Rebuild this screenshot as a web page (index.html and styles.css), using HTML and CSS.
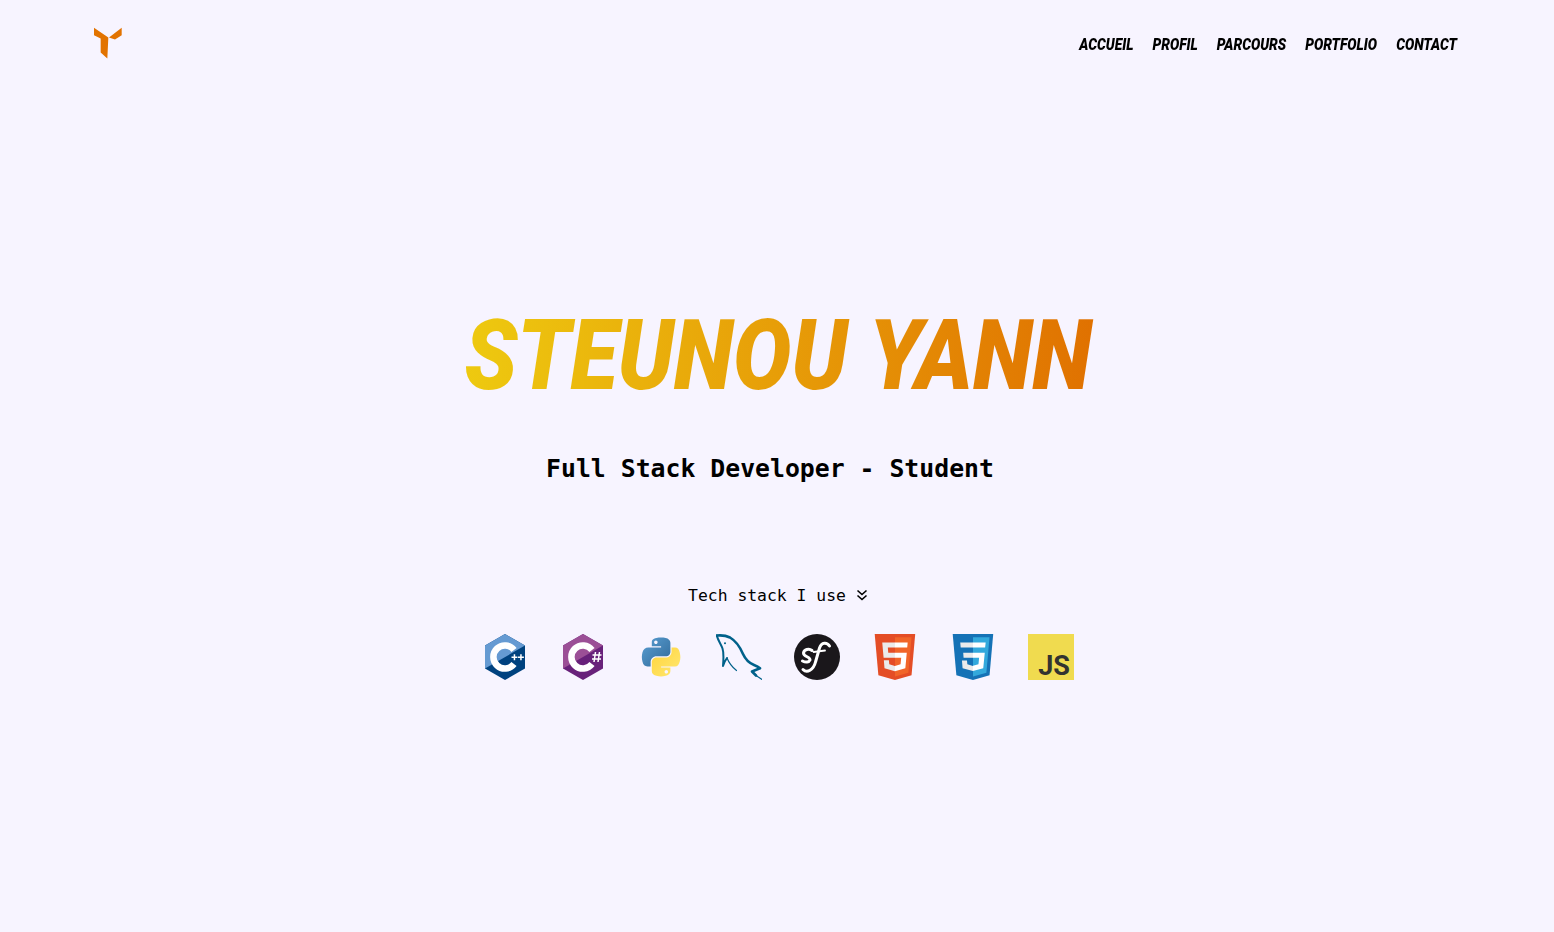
FILE: index.html
```html
<!DOCTYPE html>
<html lang="en">
<head>
<meta charset="utf-8">
<title>Steunou Yann</title>
<link rel="stylesheet" href="styles.css">
</head>
<body>

<header class="top_bar">
    <a class="logo" href="#">
        <svg width="28" height="32" viewBox="42 36 84 95">
            <path fill="#e27300" d="M42 38 85 67 82 130 62 112V70L42 60Z"/>
            <path fill="#e27300" d="M125 38V60L105 73 87 67Z"/>
        </svg>
    </a>
    <nav class="menu">
        <a href="#">Accueil</a>
        <a href="#">Profil</a>
        <a href="#">Parcours</a>
        <a href="#">Portfolio</a>
        <a href="#">Contact</a>
    </nav>
</header>

<main class="hero">
    <h1>Steunou Yann</h1>
    <p class="job">Full Stack Developer - Student</p>
    <p class="stack_title">
        <span>Tech stack I use</span>
        <svg class="chevrons" width="12" height="12" viewBox="0 0 12 12" fill="none" stroke="#000" stroke-width="1.6">
            <path d="M1.500 1.500 6 5.500 10.500 1.500"/>
            <path d="M1.500 6.500 6 10.500 10.500 6.500"/>
        </svg>
    </p>
    <div class="stack">
        <!-- c++ -->
        <svg class="tech" viewBox="0 0 46 46">
            <path fill="#00427f" d="M23 0 43 11.5V34.5L23 46 3 34.5V11.5Z"/>
            <path fill="#659ad2" d="M23 0 43 11.5 3 34.5V11.5Z"/>
            <path fill="none" stroke="#fff" stroke-width="6.5" d="M32 16A11.5 11.5 0 1 0 32 30"/>
            <path fill="#fff" d="M29.500 22.500h2.200v-2.200h1.500v2.200h2.200V24h-2.200v2.200h-1.500V24h-2.200ZM36 22.500h2.200v-2.200h1.500v2.200h2.200V24h-2.200v2.200h-1.500V24H36Z"/>
        </svg>
        <!-- c# -->
        <svg class="tech" viewBox="0 0 46 46">
            <path fill="#68217a" d="M23 0 43 11.5V34.5L23 46 3 34.5V11.5Z"/>
            <path fill="#9b4f96" d="M23 0 43 11.5 3 34.5V11.5Z"/>
            <path fill="none" stroke="#fff" stroke-width="6.5" d="M32 16A11.5 11.5 0 1 0 32 30"/>
            <path fill="none" stroke="#fff" stroke-width="1.5" d="M35.5 18 34 28M39.5 18 38 28M32.5 21h9M32 25h9"/>
        </svg>
        <!-- python -->
        <svg class="tech" viewBox="-11.1 -10.3 132.6 132.6">
            <defs>
                <linearGradient id="py_blue" x1="0" y1="0" x2="1" y2="1">
                    <stop offset="0" stop-color="#5a9fd4"/>
                    <stop offset="1" stop-color="#306998"/>
                </linearGradient>
                <linearGradient id="py_yellow" x1="0" y1="0" x2="1" y2="1">
                    <stop offset="0" stop-color="#ffd43b"/>
                    <stop offset="1" stop-color="#ffe873"/>
                </linearGradient>
            </defs>
            <path fill="url(#py_blue)" d="M54.92 0C50.34.02 45.96.41 42.11 1.09 30.76 3.1 28.7 7.29 28.7 15.03V25.25H55.51V28.66H18.64C10.85 28.66 4.02 33.34 1.89 42.25-.57 52.46-.68 58.84 1.89 69.5 3.79 77.44 8.35 83.09 16.14 83.09H25.36V70.84C25.36 61.99 33.02 54.18 42.11 54.18H68.89C76.34 54.18 82.29 48.04 82.29 40.56V15.03C82.29 7.76 76.16 2.31 68.89 1.09 64.28.32 59.5-.02 54.92 0ZM40.42 8.22C43.19 8.22 45.45 10.52 45.45 13.35 45.45 16.16 43.19 18.44 40.42 18.44 37.64 18.44 35.39 16.16 35.39 13.35 35.39 10.52 37.64 8.22 40.42 8.22Z"/>
            <path fill="url(#py_yellow)" d="M85.64 28.66V40.56C85.64 49.81 77.79 57.59 68.85 57.59H42.07C34.73 57.59 28.66 63.87 28.66 71.22V96.75C28.66 104.02 34.98 108.29 42.07 110.37 50.55 112.87 58.69 113.32 68.85 110.37 75.6 108.42 82.26 104.48 82.26 96.75V86.53H55.48V83.09H95.66C103.46 83.09 106.36 77.65 109.07 69.5 111.87 61.11 111.75 53.04 109.07 42.25 107.14 34.48 103.46 28.66 95.66 28.66ZM70.5 93.22C73.28 93.22 75.53 95.5 75.53 98.31 75.53 101.14 73.28 103.44 70.5 103.44 67.73 103.44 65.47 101.14 65.47 98.31 65.47 95.5 67.73 93.22 70.5 93.22Z"/>
        </svg>
        <!-- mysql -->
        <svg class="tech" viewBox="0 0 46 46">
            <g fill="none" stroke="#00618a" stroke-linejoin="round" stroke-linecap="round">
                <path stroke-width="2.600" d="M.8 1.500C6 1 10 1.500 14 3.500 20 7 24 13 27 20 29.500 25.500 33 29 38 31 40.500 32 42.500 33 44 34.300L36 37.500 40 41.500"/>
                <path stroke-width="1.200" d="M40 41.500 46 45.500"/>
                <path stroke-width="2" d="M.8 1.500C2 6.500 5 10 6.500 14.500 8 19 7.500 26 7 32 8 28.500 9.500 26 11 24"/>
                <path stroke-width="1.200" d="M11 24C13 29 16 33 20.500 36.500"/>
            </g>
            <circle cx="9" cy="9.300" r="1" fill="#00618a"/>
        </svg>
        <!-- symfony -->
        <svg class="tech" viewBox="0 0 46 46">
            <circle cx="23" cy="23" r="23" fill="#1a171b"/>
            <g fill="none" stroke="#fff" stroke-linecap="round">
                <path stroke-width="3" d="M35.500 12C33 8 27.500 8 25.500 14L21.500 28C19.500 36 13 39.500 9 35.500"/>
                <path stroke-width="1.800" d="M19.500 18 31 16.500"/>
                <path stroke-width="3" d="M18 16.500C15 14 10 15.500 9.500 19 9.500 23 16.500 22.500 16 26 15 28.500 11.500 28.500 8.500 27"/>
            </g>
        </svg>
        <!-- html5 -->
        <svg class="tech" viewBox="0 0 512 512">
            <path fill="#e44d26" d="M71 460 30 0H481L440 460 255 512"/>
            <path fill="#f16529" d="M256 472 405 431 440 37H256"/>
            <path fill="#ebebeb" d="M256 208H181L176 150H256V94H114L129 265H256ZM255 355 192 338 188 293H132L139 382 255 414H256V355Z"/>
            <path fill="#fff" d="M255 208V265H325L318 338 255 355V414L371 382 387 208ZM255 94V150H392L397 94Z"/>
        </svg>
        <!-- css3 -->
        <svg class="tech" viewBox="0 0 512 512">
            <path fill="#1572b6" d="M71 460 30 0H481L440 460 255 512"/>
            <path fill="#33a9dc" d="M256 472 405 431 440 37H256"/>
            <path fill="#ebebeb" d="M256 208H147L151 264H256ZM256 94H114L119 150H256ZM256 355H255L193 338 189 294H133L140 381 255 413H256Z"/>
            <path fill="#fff" d="M255 208V264H324L317 337 255 354V413L370 381 387 208ZM255 94V150H391L397 94Z"/>
        </svg>
        <div class="tech js_icon">JS</div>
    </div>
</main>

</body>
</html>
```

FILE: styles.css
```css
*,*:after,*:before{
	box-sizing: border-box;
}
body{
	font-family: "DejaVu Sans Mono", monospace;
	margin: 0;
	background: #f7f4ff;
	color: #000;
	min-height: 100vh;
}
a{
	color: inherit;
	text-decoration: none;
}

.top_bar{
	display: flex;
	align-items: center;
	justify-content: space-between;
	padding: 27px 97px 0 94px;
}
.logo{
	display: flex;
}
.menu{
	display: flex;
	gap: 19px;
	margin-top: 2px;
	font-family: Roboto, sans-serif;
	font-size: 13.8px;
	font-weight: 900;
	font-style: italic;
	text-transform: uppercase;
	transform: scaleY(1.25);
}

.hero{
	display: flex;
	flex-direction: column;
	align-items: center;
	padding: 241px 0 0 2px;
}
h1{
	margin: 0;
	padding: 0 10px;
	font-family: Roboto, sans-serif;
	font-size: 87px;
	line-height: 110px;
	font-weight: 900;
	font-style: italic;
	text-transform: uppercase;
	background: linear-gradient(to right, #eecb10, #e07000);
	-webkit-background-clip: text;
	background-clip: text;
	color: transparent;
	transform: scaleY(1.12);
}
.job{
	margin: 44px 16px 0 0;
	font-size: 24.8px;
	line-height: 30px;
	font-weight: 700;
}
.stack_title{
	display: flex;
	align-items: center;
	gap: 10px;
	margin: 102px 0 0;
	font-size: 16.4px;
	line-height: 20px;
}
.chevrons{
	margin-bottom: 3px;
}
.stack{
	display: flex;
	gap: 32px;
	margin-top: 28px;
}
.tech{
	width: 46px;
	height: 46px;
}
.js_icon{
	display: flex;
	align-items: flex-end;
	justify-content: flex-end;
	padding: 0 4px 3px 0;
	background: #f0db4f;
	color: #323330;
	font-family: Roboto, sans-serif;
	font-size: 27px;
	line-height: 22px;
	font-weight: 700;
}
```
